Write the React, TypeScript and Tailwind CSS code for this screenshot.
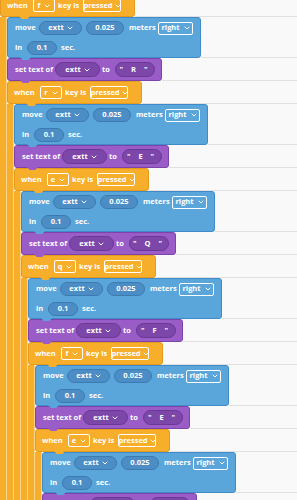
const levels = [
  { key: "f", letter: "R" },
  { key: "r", letter: "E" },
  { key: "e", letter: "Q" },
  { key: "q", letter: "F" },
  { key: "f", letter: "E" },
  { key: "e", letter: "R" },
];

function Chevron() {
  return (
    <svg width="6" height="4" viewBox="0 0 6 4" className="shrink-0">
      <path d="M1 1l2 2 2-2" stroke="white" strokeWidth="1" fill="none" strokeLinecap="round" strokeLinejoin="round" />
    </svg>
  );
}

function Tab({ color, left }: { color: string; left: string }) {
  return <div className={`absolute top-full z-10 h-[3px] w-[11px] [clip-path:polygon(0_0,100%_0,75%_100%,25%_100%)] ${color} ${left}`} />;
}

function Row({ h, children }: { h: string; children: React.ReactNode }) {
  return (
    <div className={`flex ${h}`}>
      {children}
      <div className="flex-1 border-b border-[#e1e1e1]" />
    </div>
  );
}

function Hat({ k }: { k: string }) {
  return (
    <div className="relative flex h-[23px] w-[135px] shrink-0 items-center rounded-[3px] border border-[#e39a1d] bg-[#f7ae2b] pl-[6px]">
      <span className="w-[26px]">when</span>
      <span className="flex h-[13px] w-[22px] items-center justify-center gap-[4px] rounded-[2px] border border-white">
        {k}
        <Chevron />
      </span>
      <span className="w-[28px] pl-[3px]">key is</span>
      <span className="flex h-[13px] w-[38px] items-center justify-center gap-[2px] rounded-[2px] border border-white">
        pressed
        <Chevron />
      </span>
      <Tab color="bg-[#f7ae2b]" left="left-[18px]" />
    </div>
  );
}

function BluePill({ w, children }: { w: string; children: React.ReactNode }) {
  return (
    <span className={`flex h-[14px] items-center justify-center gap-[3px] rounded-full border border-[#3c7bb0] bg-[#4b8dc4] ${w}`}>
      {children}
    </span>
  );
}

function PurplePill({ w, children }: { w: string; children: React.ReactNode }) {
  return (
    <span className={`flex h-[15px] items-center justify-center gap-[3px] rounded-full border border-[#6a3794] bg-[#7c47a8] ${w}`}>
      {children}
    </span>
  );
}

function Move() {
  return (
    <div className="relative h-[41px] w-[194px] shrink-0 rounded-[3px] border border-[#3f8bc9] bg-[#5aa6da] pl-[7px]">
      <div className="flex h-[20px] items-center">
        <span className="w-[24px]">move</span>
        <BluePill w="w-[43px]">
          extt
          <Chevron />
        </BluePill>
        <span className="ml-[4px]" />
        <BluePill w="w-[38px]">0.025</BluePill>
        <span className="w-[34px] pl-[5px]">meters</span>
        <span className="flex h-[13px] w-[35px] items-center justify-center gap-[4px] rounded-[2px] border border-white">
          right
          <Chevron />
        </span>
      </div>
      <div className="flex h-[19px] items-center">
        <span className="w-[12px]">in</span>
        <BluePill w="w-[30px]">0.1</BluePill>
        <span className="ml-[4px]">sec.</span>
      </div>
      <Tab color="bg-[#5aa6da]" left="left-[12px]" />
    </div>
  );
}

function SetText({ letter }: { letter: string }) {
  return (
    <div className="relative flex h-[23px] w-[155px] shrink-0 items-center rounded-[3px] border border-[#7e43aa] bg-[#9a5cc7] pl-[7px]">
      <span className="w-[40px]">set text of</span>
      <PurplePill w="w-[45px]">
        extt
        <Chevron />
      </PurplePill>
      <span className="w-[15px] pl-[2px]">to</span>
      <PurplePill w="w-[40px]">
        <span className="tracking-[3px]">" {letter} "</span>
      </PurplePill>
      <Tab color="bg-[#9a5cc7]" left="left-[12px]" />
    </div>
  );
}

function Level({ i }: { i: number }) {
  if (i >= levels.length) return null;
  const l = levels[i];
  return (
    <div>
      <Row h="h-[23px]">
        <Hat k={l.key} />
      </Row>
      <div className="flex">
        <div className="w-[7px] shrink-0 border-r border-[#fbd489] bg-[#f7ae2b]" />
        <div className="min-w-0 flex-1">
          <Row h="h-[41px]">
            <Move />
          </Row>
          <Row h="h-[23px]">
            <SetText letter={l.letter} />
          </Row>
          <Level i={i + 1} />
        </div>
      </div>
    </div>
  );
}

export default function App() {
  return (
    <div className="h-[500px] w-[297px] overflow-hidden bg-[#f9f9f9] font-['Open_Sans',sans-serif] text-[7.5px] font-bold leading-none text-white">
      <div className="-mt-[6px]">
        <Level i={0} />
      </div>
    </div>
  );
}
